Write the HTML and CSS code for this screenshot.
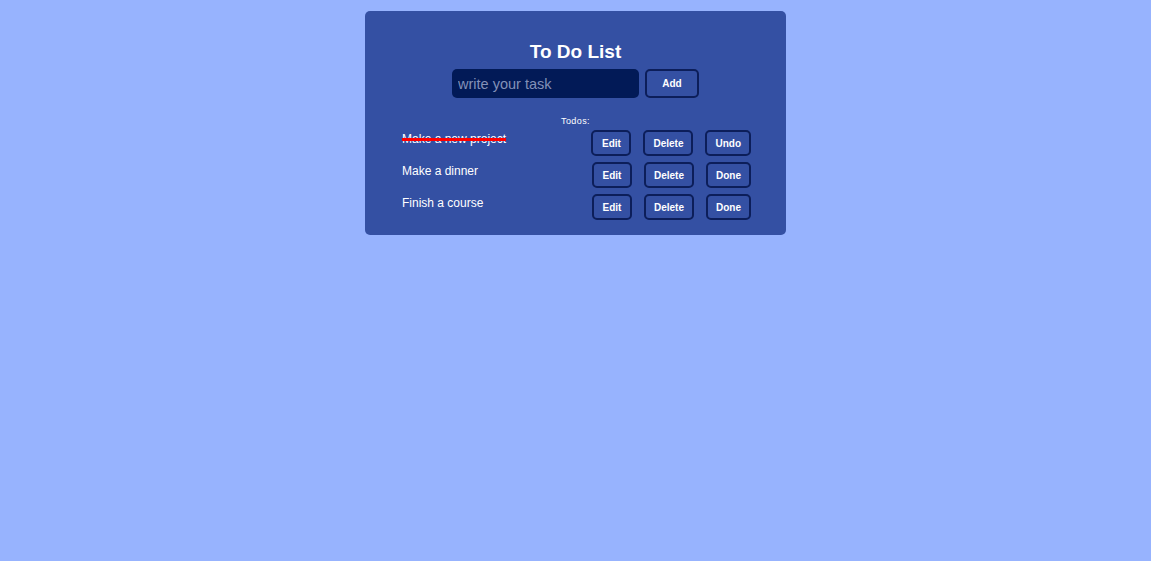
FILE: index.html
```html
<!DOCTYPE html>
<html>
<head>
<meta charset="utf-8">
<link rel="stylesheet" href="styles.css">
</head>
<body>
<div class="card">
  <h1 class="title">To Do List</h1>
  <div class="add-row">
    <input class="task-input" type="text" placeholder="write your task">
    <button class="btn add-btn">Add</button>
  </div>
  <div class="todos-label">Todos:</div>
  <div class="list">
    <div class="item">
      <span class="item-text done">Make a new project</span>
      <div class="actions">
        <button class="btn btn-edit">Edit</button>
        <button class="btn">Delete</button>
        <button class="btn">Undo</button>
      </div>
    </div>
    <div class="item">
      <span class="item-text">Make a dinner</span>
      <div class="actions">
        <button class="btn btn-edit">Edit</button>
        <button class="btn">Delete</button>
        <button class="btn">Done</button>
      </div>
    </div>
    <div class="item">
      <span class="item-text">Finish a course</span>
      <div class="actions">
        <button class="btn btn-edit">Edit</button>
        <button class="btn">Delete</button>
        <button class="btn">Done</button>
      </div>
    </div>
  </div>
</div>
</body>
</html>
```
FILE: styles.css
```css
html, body {
  margin: 0;
  padding: 0;
}
body {
  background: #97b3fe;
  font-family: "Liberation Sans", Arial, sans-serif;
  color: #ffffff;
  padding-top: 11px;
}
.card {
  width: 421px;
  margin: 0 auto;
  background: #3450a3;
  border-radius: 5px;
  padding: 29px 34px 15px 34px;
  box-sizing: border-box;
}
.title {
  margin: 0;
  text-align: center;
  font-size: 19px;
  font-weight: bold;
  line-height: 23px;
}
.add-row {
  display: flex;
  justify-content: center;
  gap: 6px;
  margin-top: 6px;
}
.task-input {
  width: 187px;
  height: 29px;
  box-sizing: border-box;
  background: #021a57;
  border: none;
  border-radius: 5px;
  padding: 0 6px;
  font-family: "Liberation Sans", Arial, sans-serif;
  font-size: 14.5px;
  color: #ffffff;
  outline: none;
}
.task-input::placeholder {
  color: #8391b8;
}
.btn {
  height: 26px;
  box-sizing: border-box;
  background: #3450a3;
  border: 2px solid #0c1e5a;
  border-radius: 5px;
  color: #ffffff;
  font-family: "Liberation Sans", Arial, sans-serif;
  font-size: 10px;
  font-weight: bold;
  padding: 0 8px;
  cursor: pointer;
}
.btn-edit {
  width: 40px;
  padding: 0;
}
.add-btn {
  width: 54px;
  height: 29px;
}
.todos-label {
  text-align: center;
  font-size: 9px;
  letter-spacing: 0.4px;
  margin-top: 18px;
  line-height: 10px;
}
.list {
  display: flex;
  flex-direction: column;
  gap: 6px;
  margin-top: 4px;
  padding: 0 1px 0 3px;
}
.item {
  display: flex;
  justify-content: space-between;
  align-items: flex-start;
}
.item-text {
  font-size: 12px;
  line-height: 14px;
  padding-top: 2px;
}
.item-text.done {
  text-decoration: line-through;
  text-decoration-color: #ff0000;
  text-decoration-thickness: 3px;
}
.actions {
  display: flex;
  gap: 12px;
}
```
